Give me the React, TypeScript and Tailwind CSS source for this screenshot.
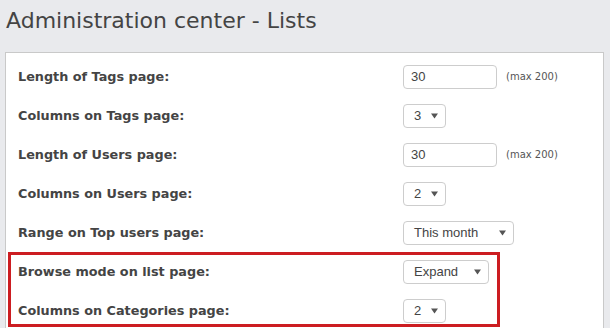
import React from 'react';

type Row =
  | { label: string; kind: 'input'; value: string; hint: string }
  | { label: string; kind: 'select'; value: string; width: string };

const rows: Row[] = [
  { label: 'Length of Tags page:', kind: 'input', value: '30', hint: '(max 200)' },
  { label: 'Columns on Tags page:', kind: 'select', value: '3', width: 'w-[43px]' },
  { label: 'Length of Users page:', kind: 'input', value: '30', hint: '(max 200)' },
  { label: 'Columns on Users page:', kind: 'select', value: '2', width: 'w-[43px]' },
  { label: 'Range on Top users page:', kind: 'select', value: 'This month', width: 'w-[111px]' },
];

const marked: Row[] = [
  { label: 'Browse mode on list page:', kind: 'select', value: 'Expand', width: 'w-[86px]' },
  { label: 'Columns on Categories page:', kind: 'select', value: '2', width: 'w-[43px]' },
];

function Arrow() {
  return (
    <svg width="7" height="6" viewBox="0 0 7 6" className="shrink-0">
      <polygon points="0,0.5 7,0.5 3.5,5.5" fill="#555" />
    </svg>
  );
}

function Control({ row }: { row: Row }) {
  if (row.kind === 'input') {
    return (
      <div className="flex items-center">
        <div className="flex h-[24px] w-[94px] items-center rounded-[4px] border border-[#cdcdcd] bg-white pl-[7px] font-['Liberation_Sans',sans-serif] text-[13px] text-[#444]">
          {row.value}
        </div>
        <span className="ml-[9px] font-['DejaVu_Sans',sans-serif] text-[10px] text-[#555]">{row.hint}</span>
      </div>
    );
  }
  return (
    <div
      className={`flex h-[24px] ${row.width} items-center justify-between rounded-[4px] border border-[#cdcdcd] bg-white pl-[10px] pr-[7px] font-['Liberation_Sans',sans-serif] text-[13px] text-[#444]`}
    >
      <span>{row.value}</span>
      <Arrow />
    </div>
  );
}

function SettingRow({ row }: { row: Row }) {
  return (
    <div className="flex h-[39px] items-center">
      <div className="w-[385px] font-['DejaVu_Sans',sans-serif] text-[12.8px] font-bold text-[#444]">{row.label}</div>
      <Control row={row} />
    </div>
  );
}

export default function App() {
  return (
    <div className="h-[328px] w-[610px] overflow-hidden bg-[#e9eaed]">
      <h1 className="pl-[6px] pt-[8px] font-['DejaVu_Sans',sans-serif] text-[22px] leading-[26px] font-normal text-[#444]">
        Administration center - Lists
      </h1>
      <div className="ml-[5px] mt-[18px] w-[599px] border border-[#c9c9c9] bg-white px-3 pt-[4px] pb-4">
        {rows.map((row, i) => (
          <SettingRow key={i} row={row} />
        ))}
        <div className="relative">
          {marked.map((row, i) => (
            <SettingRow key={i} row={row} />
          ))}
          <div className="pointer-events-none absolute left-[-10px] top-0 h-[75px] w-[492px] border-[3px] border-[#cc1d21]" />
        </div>
      </div>
    </div>
  );
}
